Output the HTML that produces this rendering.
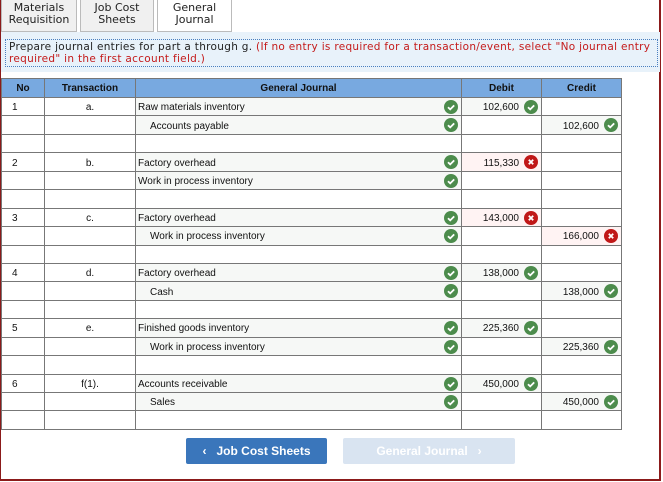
<!DOCTYPE html>
<html><head><style>
*{box-sizing:border-box;margin:0;padding:0}
body{width:663px;height:482px;background:#fff;position:relative;overflow:hidden;font-family:"Liberation Sans",Arial,sans-serif}
.frame{position:absolute;left:0;top:0;width:661px;height:481px;border-left:1px solid #8b1a1a;border-right:2px solid #8b1a1a;border-bottom:2px solid #8b1a1a}
.tabs{position:absolute;top:0;left:1px;height:32px;display:flex;font-family:"DejaVu Sans",Verdana,sans-serif;font-size:11px;color:#222}
.tab{height:32px;border:1px solid #bbb;border-top:none;background:#f0f0f0;text-align:center;line-height:12px;padding-top:2px;margin-right:3px}
.tab.on{background:#fff}
.band{position:absolute;left:1px;top:32px;width:659px;height:40px;background:#e8f2fa}
.instr{position:absolute;left:5px;top:39px;width:653px;height:28px;border:1px dotted #4a7fbf;font-family:"DejaVu Sans",Verdana,sans-serif;font-size:10.5px;line-height:12px;color:#222;padding:1px 3px;letter-spacing:0.3px}
.instr span{color:#c41a1a}
table{position:absolute;left:1px;top:78px;border-collapse:collapse;table-layout:fixed;font-size:10px;color:#111}
td,th{border:1px solid #777;height:18.45px;padding:2px 0 0 0;position:relative;vertical-align:middle}
th{background:#78a9e0;font-weight:bold;height:19px;font-size:10px;padding-top:1px}
.c{text-align:center}
.g{background:#f6f8f6}
.r{background:#fff3f3}
.acc{padding-left:2px}
.ind{padding-left:14px}
.num{text-align:right;padding-right:22px}
.ic{position:absolute;right:3px;top:2px;width:14px;height:14px;border-radius:50%;background:#4c8c4c}
.ic.x{background:#c01818}
.ic svg{position:absolute;left:0;top:0}
.btn{position:absolute;top:438px;height:26px;font-size:12px;font-weight:bold;color:#fff;line-height:26px;text-align:center;border-radius:2px}
</style></head><body>
<div class="frame"></div>
<div class="tabs">
<div class="tab" style="width:76px">Materials<br>Requisition</div>
<div class="tab" style="width:74px">Job Cost<br>Sheets</div>
<div class="tab on" style="width:75px">General<br>Journal</div>
</div>
<div class="band"></div>
<div class="instr">Prepare journal entries for part a through g. <span>(If no entry is required for a transaction/event, select "No journal entry required" in the first account field.)</span></div>
<table>
<colgroup><col style="width:43px"><col style="width:91px"><col style="width:326px"><col style="width:80px"><col style="width:80px"></colgroup>
<tr><th>No</th><th>Transaction</th><th>General Journal</th><th>Debit</th><th>Credit</th></tr>
<tbody id="b"></tbody>
</table>
<div class="btn" style="left:186px;width:141px;background:#3a76bb">‹&nbsp;&nbsp;&nbsp;Job Cost Sheets</div>
<div class="btn" style="left:343px;width:172px;background:#d9e4f1">General Journal&nbsp;&nbsp;&nbsp;›</div>
<script>
var ok='<span class="ic"><svg width="14" height="14"><path d="M4 7.2l2.2 2.2 4-4" stroke="#fff" stroke-width="1.8" fill="none"/></svg></span>';
var bad='<span class="ic x"><svg width="14" height="14"><path d="M4.8 4.8l4.4 4.4M9.2 4.8l-4.4 4.4" stroke="#fff" stroke-width="1.8"/></svg></span>';
var d=[
['1','a.','Raw materials inventory','102,600',1,'','Accounts payable','','102,600',1],
['2','b.','Factory overhead','115,330',0,'','Work in process inventory','','',-1],
['3','c.','Factory overhead','143,000',0,'','Work in process inventory','','166,000',0,1],
['4','d.','Factory overhead','138,000',1,'','Cash','','138,000',1],
['5','e.','Finished goods inventory','225,360',1,'','Work in process inventory','','225,360',1],
['6','f(1).','Accounts receivable','450,000',1,'','Sales','','450,000',1]];
var h='';
d.forEach(function(r){
h+='<tr><td class="acc" style="padding-left:10px">'+r[0]+'</td><td class="c">'+r[1]+'</td><td class="acc g">'+r[2]+ok+'</td><td class="num '+(r[4]?'g':'r')+'">'+r[3]+(r[4]?ok:bad)+'</td><td></td></tr>';
var ind=(r[0]=='2')?'acc':'ind';
var cc=r[9]==-1?'<td></td>':'<td class="num '+(r[9]?'g':'r')+'">'+r[8]+(r[9]?ok:bad)+'</td>';
h+='<tr><td></td><td></td><td class="'+ind+' g">'+r[6]+ok+'</td><td></td>'+cc+'</tr>';
h+='<tr><td></td><td></td><td></td><td></td><td></td></tr>';
});
document.getElementById('b').innerHTML=h;
</script>
</body></html>
